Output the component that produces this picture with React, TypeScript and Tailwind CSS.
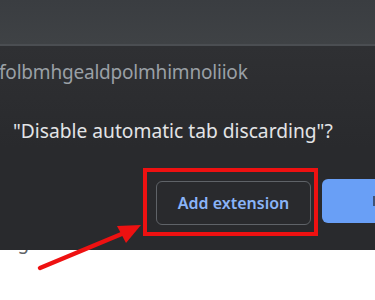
const font = { fontFamily: '"Noto Sans", "Open Sans", Arial, sans-serif' }

function Arrow() {
	return (
		<svg
			className="pointer-events-none absolute left-0 top-0"
			width={375}
			height={300}
			viewBox="0 0 375 300"
		>
			<line x1={40} y1={268} x2={124} y2={233} stroke="#ee1111" strokeWidth={4.5} strokeLinecap="round" />
			<polygon points="141,225 117,226 126,243" fill="#ee1111" />
		</svg>
	)
}

export default function App() {
	return (
		<div className="relative h-[300px] w-[375px] overflow-hidden bg-white" style={font}>
			<div className="h-[44px] bg-gradient-to-b from-[#3a3d41] to-[#3f4245]" />
			<div className="h-[2px] bg-[#4b4e52]" />
			<div className="flex h-[204px] flex-col bg-gradient-to-b from-[#2f3033] via-[#292a2d] to-[#292a2d]">
				<div className="mt-[14px] -ml-[1px] text-[19px] leading-[24px] tracking-[-0.2px] text-[#9aa0a6]">
					folbmhgealdpolmhimnoliiok
				</div>
				<div className="mt-[34px] ml-[13px] whitespace-nowrap text-[19.2px] leading-[26px] text-[#e3e4e6]">
					"Disable automatic tab discarding"?
				</div>
				<div className="mt-[24px] flex items-center">
					<div className="ml-[143px] border-4 border-[#ee1111] pl-[9px] pr-[3px] pt-[9px] pb-[7px]">
						<button className="flex h-[44px] w-[155px] items-center justify-center rounded-[6px] border border-[#5f6368] bg-[#292a2d] text-[16px] font-semibold text-[#8ab4f8]">
							Add extension
						</button>
					</div>
					<div className="ml-[4px] -mt-[2px] flex h-[44px] flex-1 items-center justify-end rounded-l-[6px] bg-[#699ff6]">
						<span className="h-[10px] w-[2px] bg-[#202124]/60" />
					</div>
				</div>
			</div>
			<div className="h-[54px] overflow-hidden">
				<div className="-mt-[22px] ml-[-6px] text-[19px] leading-[28px] text-[#5f6368]">ting</div>
			</div>
			<Arrow />
		</div>
	)
}
